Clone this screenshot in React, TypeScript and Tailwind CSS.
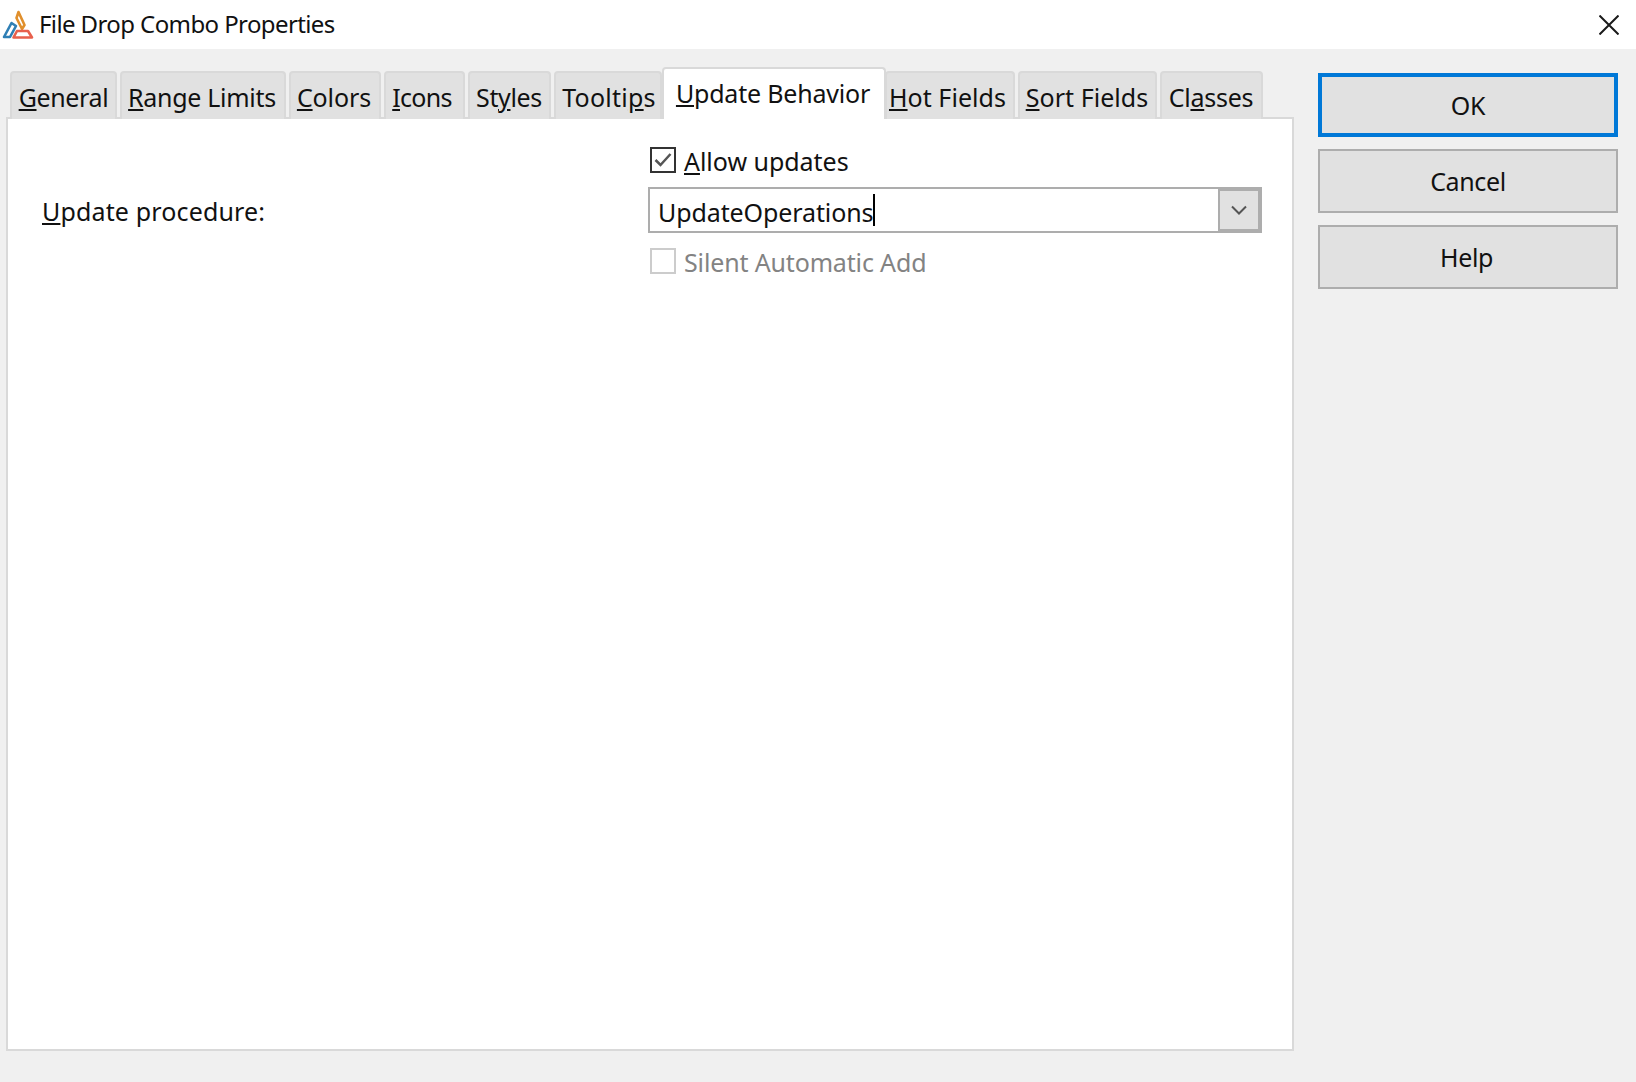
const TABS_BEFORE = [
  { pre: "", hot: "G", post: "eneral", cls: "w-[107px] tracking-[-0.35px]" },
  { pre: "", hot: "R", post: "ange Limits", cls: "w-[166px] tracking-[-0.3px] pr-[2px]" },
  { pre: "", hot: "C", post: "olors", cls: "w-[92px] tracking-[-0.1px] pr-[2px]" },
  { pre: "", hot: "I", post: "cons", cls: "w-[81px] tracking-[-0.7px] pr-[5px]" },
  { pre: "St", hot: "y", post: "les", cls: "w-[83px] tracking-[-0.35px] pr-[1px]" },
  { pre: "Toolti", hot: "p", post: "s", cls: "w-[108px] tracking-[0.25px] pl-[2px]" },
];

const TABS_AFTER = [
  { pre: "", hot: "H", post: "ot Fields", cls: "w-[130px] tracking-[0.05px] pr-[5px]" },
  { pre: "", hot: "S", post: "ort Fields", cls: "w-[139px] tracking-[0.05px] pr-[1px]" },
  { pre: "Cl", hot: "a", post: "sses", cls: "w-[103px] tracking-[-0.25px] pr-[1px]" },
];

function AppIcon() {
  return (
    <svg width="32" height="30" viewBox="0 0 32 30" fill="none" strokeWidth="2.6" strokeLinejoin="round">
      <path d="M16.5 2 L22.5 15 L20 19 L14.5 8 Z" stroke="#e08f2c" />
      <path d="M9.5 13 L14 16 L8 27 L2 27 Z" stroke="#2f7fb5" />
      <path d="M15 21 L26 21 L30 27.5 L11.5 27.5 Z" stroke="#e8604c" />
    </svg>
  );
}

function Tab({ pre, hot, post, cls }: { pre: string; hot: string; post: string; cls: string }) {
  return (
    <div
      className={`${cls} flex h-[48px] items-center justify-center rounded-t-[4px] border-2 border-b-0 border-[#d9d9d9] bg-[#e1e1e1] pt-[3px] whitespace-nowrap`}
    >
      <span>
        {pre}
        <u className="underline-offset-2">{hot}</u>
        {post}
      </span>
    </div>
  );
}

function DialogButton({ label, primary, nudge }: { label: string; primary?: boolean; nudge?: string }) {
  return (
    <div
      className={`flex h-16 items-center justify-center bg-[#e1e1e1] pt-[2px] ${nudge ?? ""} ${
        primary ? "border-4 border-[#0078d7]" : "border-2 border-[#adadad]"
      }`}
    >
      {label}
    </div>
  );
}

export default function App() {
  return (
    <div className="flex h-[1082px] w-[1636px] flex-col overflow-hidden bg-[#f0f0f0] font-['Noto_Sans',sans-serif] text-[25px] tracking-[-0.35px] text-[#111]">
      <div className="flex h-[49px] items-center justify-between bg-white pr-[17px] pl-[2px]">
        <div className="flex items-center gap-[5px]">
          <AppIcon />
          <span className="pb-[2px] text-[24px] tracking-[-0.6px]">File Drop Combo Properties</span>
        </div>
        <svg width="20" height="20" viewBox="0 0 20 20" stroke="#1a1a1a" strokeWidth="2">
          <path d="M0.5 0.5 L19.5 19.5 M19.5 0.5 L0.5 19.5" />
        </svg>
      </div>

      <div className="flex flex-1 pt-[18px] pr-[18px] pb-[31px] pl-[6px]">
        <div className="flex w-[1288px] flex-col">
          <div className="relative z-10 -mb-[2px] flex items-end gap-[3px] pl-[4px]">
            {TABS_BEFORE.map((t) => (
              <Tab key={t.cls} {...t} />
            ))}
            <div className="relative z-10 -mr-[4px] -ml-[3px] flex h-[52px] w-[224px] items-center justify-center rounded-t-[4px] border-2 border-b-0 border-[#d9d9d9] bg-white pr-[2px] pb-[1px] tracking-[-0.2px] whitespace-nowrap">
              <span>
                <u className="underline-offset-2">U</u>pdate Behavior
              </span>
            </div>
            {TABS_AFTER.map((t) => (
              <Tab key={t.cls} {...t} />
            ))}
          </div>

          <div className="flex flex-1 border-2 border-[#d9d9d9] bg-white pt-[20px] pl-[34px]">
            <div className="w-[606px] pt-[54px] tracking-[0.15px]">
              <span>
                <u className="underline-offset-2">U</u>pdate procedure:
              </span>
            </div>
            <div className="flex w-[614px] flex-col">
              <div className="flex items-center gap-[8px] pl-[2px] tracking-[-0.03px]">
                <div className="flex size-[26px] items-center justify-center border-2 border-[#333]">
                  <svg width="20" height="20" viewBox="0 0 20 20" fill="none" stroke="#555" strokeWidth="2.5">
                    <path d="M2.5 10 L7.5 15 L17.5 4" />
                  </svg>
                </div>
                <span className="pt-[4px]">
                  <u className="underline-offset-2">A</u>llow updates
                </span>
              </div>
              <div className="mt-[6px] flex h-[46px] items-center border-2 border-[#adadad] bg-white">
                <div className="flex flex-1 items-center pl-[8px] tracking-[-0.1px]">
                  <span className="pt-[6px]">UpdateOperations</span>
                  <span className="h-[32px] w-[2px] bg-black" />
                </div>
                <div className="flex h-full w-[42px] items-center justify-center border-2 border-[#adadad] bg-[#e1e1e1]">
                  <svg width="16" height="10" viewBox="0 0 16 10" fill="none" stroke="#555" strokeWidth="2">
                    <path d="M1 1.5 L8 8.5 L15 1.5" />
                  </svg>
                </div>
              </div>
              <div className="mt-[9px] flex items-center gap-[8px] pl-[2px] tracking-[-0.15px] text-[#838383]">
                <div className="size-[26px] border-2 border-[#cccccc]" />
                <span className="pt-[2px]">Silent Automatic Add</span>
              </div>
            </div>
          </div>
        </div>

        <div className="ml-[24px] flex flex-1 flex-col gap-3 pt-[6px]">
          <DialogButton label="OK" primary />
          <DialogButton label="Cancel" />
          <DialogButton label="Help" nudge="pr-[3px]" />
        </div>
      </div>
    </div>
  );
}
